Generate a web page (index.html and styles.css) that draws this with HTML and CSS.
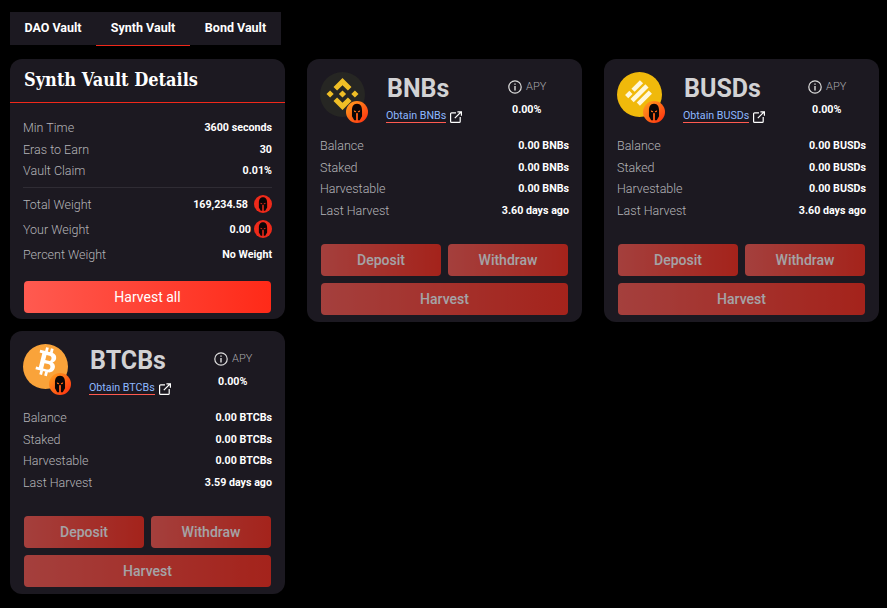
FILE: index.html
```html
<!DOCTYPE html>
<html lang="en">

<head>
    <meta charset="UTF-8">
    <title>Synth Vault</title>
    <link rel="stylesheet" href="styles.css">
</head>

<body>
    <svg class="defs" width="0" height="0">
        <symbol id="helmet" viewBox="0 0 24 24">
            <path fill-rule="evenodd" d="M12 3C7.800 3 6.500 6.500 6.500 10.500V16.500L9 21H11V13.500L12 12.800L13 13.500V21H15L17.500 16.500V10.500C17.500 6.500 16.200 3 12 3ZM8.500 10.200L11 11.300V12.200L9 11.900ZM15.500 10.200L13 11.300V12.200L15 11.900Z" fill="#0a0506" />
        </symbol>
        <symbol id="external" viewBox="0 0 12 12">
            <path d="M6 1.800H1.600C1 1.800 .6 2.200 .6 2.800V10.400C.6 11 1 11.400 1.600 11.400H9.200C9.800 11.400 10.200 11 10.200 10.400V6M4.800 7.200L11 1M7.400 .8H11.400V4.800" fill="none" stroke="#fff" stroke-width="1.200" />
        </symbol>
        <symbol id="info" viewBox="0 0 14 14">
            <circle cx="7" cy="7" r="6.200" fill="none" stroke="#ddd" stroke-width="1.200" />
            <path d="M7 6v4.400M7 3.400v1.400" stroke="#ddd" stroke-width="1.400" />
        </symbol>
    </svg>

    <div class="tabs">
        <a class="tab">DAO Vault</a>
        <a class="tab current">Synth Vault</a>
        <a class="tab">Bond Vault</a>
    </div>

    <div class="vaults">
        <div class="card details">
            <h2 class="details-title">Synth Vault Details</h2>
            <div class="details-body">
                <div class="rows">
                    <div class="row"><span class="label">Min Time</span><span class="val">3600 seconds</span></div>
                    <div class="row"><span class="label">Eras to Earn</span><span class="val">30</span></div>
                    <div class="row"><span class="label">Vault Claim</span><span class="val">0.01%</span></div>
                </div>
                <hr class="line">
                <div class="rows rows-tall">
                    <div class="row">
                        <span class="label">Total Weight</span>
                        <span class="val val-icon"><span class="val-wide">169,234.58</span><span class="spartan"><svg><use href="#helmet" /></svg></span></span>
                    </div>
                    <div class="row">
                        <span class="label">Your Weight</span>
                        <span class="val val-icon">0.00<span class="spartan"><svg><use href="#helmet" /></svg></span></span>
                    </div>
                    <div class="row"><span class="label">Percent Weight</span><span class="val">No Weight</span></div>
                </div>
                <button class="btn btn-all">Harvest all</button>
            </div>
        </div>

        <div class="card vault">
            <div class="head">
                <div class="token">
                    <svg class="token-img" viewBox="0 0 45 45">
                        <circle cx="22.500" cy="22.500" r="22.500" fill="#262623" />
                        <path d="M22.500 6L31.500 15L27.900 18.600L22.500 13.200L17.100 18.600L13.500 15ZM22.500 38L13.500 29L17.100 25.400L22.500 30.800L27.900 25.400L31.500 29ZM22.500 18.400L26.100 22L22.500 25.600L18.900 22ZM10.100 18.400L13.700 22L10.100 25.600L6.500 22ZM34.900 18.400L38.500 22L34.900 25.600L31.300 22Z" fill="#efbe26" />
                    </svg>
                    <span class="badge"><svg><use href="#helmet" /></svg></span>
                </div>
                <div class="name name-short">
                    <h3 class="symbol">BNBs</h3>
                    <div class="obtain"><a class="obtain-link">Obtain BNBs</a><svg class="ext"><use href="#external" /></svg></div>
                </div>
                <div class="apy">
                    <div class="apy-top"><svg class="info"><use href="#info" /></svg>APY</div>
                    <div class="apy-val">0.00%</div>
                </div>
            </div>
            <div class="rows">
                <div class="row"><span class="label">Balance</span><span class="val">0.00 BNBs</span></div>
                <div class="row"><span class="label">Staked</span><span class="val">0.00 BNBs</span></div>
                <div class="row"><span class="label">Harvestable</span><span class="val">0.00 BNBs</span></div>
                <div class="row"><span class="label">Last Harvest</span><span class="val">3.60 days ago</span></div>
            </div>
            <div class="actions">
                <button class="btn btn-off">Deposit</button>
                <button class="btn btn-off">Withdraw</button>
                <button class="btn btn-off btn-wide">Harvest</button>
            </div>
        </div>

        <div class="card vault">
            <div class="head">
                <div class="token">
                    <svg class="token-img" viewBox="0 0 45 45">
                        <circle cx="22.500" cy="22.500" r="22.500" fill="#f0b90b" />
                        <g transform="translate(22 20) rotate(-45)" fill="#fff8dc">
                            <rect x="-12" y="-7.700" width="6" height="4.500" />
                            <rect x="-3" y="-7.700" width="12" height="4.500" />
                            <rect x="-11" y="-1" width="21" height="4.500" />
                            <rect x="-9" y="5.800" width="17" height="4.500" />
                        </g>
                    </svg>
                    <span class="badge"><svg><use href="#helmet" /></svg></span>
                </div>
                <div class="name">
                    <h3 class="symbol">BUSDs</h3>
                    <div class="obtain"><a class="obtain-link">Obtain BUSDs</a><svg class="ext"><use href="#external" /></svg></div>
                </div>
                <div class="apy">
                    <div class="apy-top"><svg class="info"><use href="#info" /></svg>APY</div>
                    <div class="apy-val">0.00%</div>
                </div>
            </div>
            <div class="rows">
                <div class="row"><span class="label">Balance</span><span class="val">0.00 BUSDs</span></div>
                <div class="row"><span class="label">Staked</span><span class="val">0.00 BUSDs</span></div>
                <div class="row"><span class="label">Harvestable</span><span class="val">0.00 BUSDs</span></div>
                <div class="row"><span class="label">Last Harvest</span><span class="val">3.60 days ago</span></div>
            </div>
            <div class="actions">
                <button class="btn btn-off">Deposit</button>
                <button class="btn btn-off">Withdraw</button>
                <button class="btn btn-off btn-wide">Harvest</button>
            </div>
        </div>

        <div class="card vault">
            <div class="head">
                <div class="token">
                    <svg class="token-img" viewBox="0 0 45 45">
                        <circle cx="22.500" cy="22.500" r="22.500" fill="#f9a33a" />
                        <g transform="rotate(14 22.500 20)" fill="#fff">
                            <path fill-rule="evenodd" d="M14 7.500h11.500c4 0 6 2.200 6 5 0 2-1 3.500-2.600 4.300 2.200 .7 3.600 2.400 3.600 4.900 0 3.500-2.600 5.800-6.500 5.800H14l0-2.800h2.800V10.300H14zM21.300 11v5.200h3.200c1.700 0 2.500-1 2.500-2.600S26.200 11 24.500 11zM21.300 19.400V25h3.800c1.900 0 2.900-1.100 2.900-2.800s-1-2.800-2.900-2.800z" />
                            <path d="M19 3.500h2.800v4.500H19zM24 3.500h2.800v4.500H24zM19 27h2.800v4.500H19zM24 27h2.800v4.500H24z" />
                        </g>
                    </svg>
                    <span class="badge"><svg><use href="#helmet" /></svg></span>
                </div>
                <div class="name">
                    <h3 class="symbol">BTCBs</h3>
                    <div class="obtain"><a class="obtain-link">Obtain BTCBs</a><svg class="ext"><use href="#external" /></svg></div>
                </div>
                <div class="apy">
                    <div class="apy-top"><svg class="info"><use href="#info" /></svg>APY</div>
                    <div class="apy-val">0.00%</div>
                </div>
            </div>
            <div class="rows">
                <div class="row"><span class="label">Balance</span><span class="val">0.00 BTCBs</span></div>
                <div class="row"><span class="label">Staked</span><span class="val">0.00 BTCBs</span></div>
                <div class="row"><span class="label">Harvestable</span><span class="val">0.00 BTCBs</span></div>
                <div class="row"><span class="label">Last Harvest</span><span class="val">3.59 days ago</span></div>
            </div>
            <div class="actions">
                <button class="btn btn-off">Deposit</button>
                <button class="btn btn-off">Withdraw</button>
                <button class="btn btn-off btn-wide">Harvest</button>
            </div>
        </div>
    </div>
</body>

</html>
```
FILE: styles.css
```css
* {
    padding: 0;
    margin: 0;
    box-sizing: border-box;
}

body {
    background: #000;
    padding: 12px 8px 0 10px;
    font-family: Roboto, "Liberation Sans", sans-serif;
    color: #fff;
}

.defs {
    position: absolute;
}

/* tabs */
.tabs {
    display: grid;
    grid-template-columns: 86px 94px 91px;
    width: 271px;
    height: 33px;
    background: #1c1921;
}

.tab {
    font-size: 12.500px;
    font-weight: 700;
    line-height: 31px;
    text-align: center;
}

.tab.current {
    height: 34px;
    border-bottom: 1px solid #f0281a;
}

/* cards */
.vaults {
    display: grid;
    grid-template-columns: repeat(3, 275px);
    grid-template-rows: 263px auto;
    gap: 9px 22px;
    align-items: start;
    margin-top: 14px;
}

.card {
    background: #1c1921;
    border-radius: 12px;
}

.details-title {
    height: 44px;
    padding-left: 14px;
    border-bottom: 1px solid #f0281a;
    font-family: "DejaVu Serif Condensed", "DejaVu Serif", "Liberation Serif", serif;
    font-size: 18px;
    font-weight: 700;
    line-height: 42px;
}

.details-body {
    padding: 14px 13px 6px;
}

.row {
    display: flex;
    justify-content: space-between;
    align-items: center;
    height: 21.600px;
}

.rows-tall .row {
    height: 25px;
}

.label {
    font-size: 12.500px;
    font-weight: 300;
    color: #b4b4b8;
}

.val {
    font-size: 10.700px;
    font-weight: 700;
}

.val-icon {
    display: flex;
    align-items: center;
    gap: 3px;
}

.val-wide {
    margin-right: 3px;
}

.spartan {
    display: block;
    width: 18px;
    height: 18px;
    border-radius: 50%;
    background: #ee2a1a;
}

.spartan svg,
.badge svg {
    display: block;
    width: 100%;
    height: 100%;
}

.line {
    border: 0;
    border-top: 1px solid #2f2c34;
    margin: 5px 0 4px;
}

.btn {
    display: block;
    width: 100%;
    height: 32px;
    border: 0;
    border-radius: 4px;
    font-family: inherit;
    font-size: 14px;
    font-weight: 500;
    color: #fff;
    background: linear-gradient(90deg, #ff5a50, #ff2a18);
}

.btn-all {
    width: 247px;
    margin: 14px 1px 0;
    font-weight: 400;
}

.btn-off {
    opacity: .6;
}

/* vault card */
.vault {
    padding: 13px 13px 7px;
}

.head {
    display: flex;
    height: 63px;
}

.token {
    position: relative;
    flex: none;
    width: 45px;
    height: 45px;
    margin-right: 22px;
}

.token-img {
    display: block;
    width: 45px;
    height: 45px;
}

.badge {
    position: absolute;
    right: -3px;
    bottom: -6px;
    width: 22px;
    height: 22px;
    border-radius: 50%;
    background: linear-gradient(135deg, #ffa51e, #ff2a10);
}

.name {
    width: 124px;
    flex: none;
}

.name-short {
    width: 121px;
}

.symbol {
    font-size: 25px;
    font-weight: 700;
    line-height: 34px;
    color: #d2d2d4;
}

.obtain {
    display: flex;
    align-items: flex-start;
    gap: 4px;
    margin-top: 3px;
    margin-left: -1px;
}

.obtain-link {
    font-size: 10.700px;
    font-weight: 400;
    line-height: 13px;
    color: #8db8ff;
    border-bottom: 1px solid #ff5a50;
}

.ext {
    width: 12px;
    height: 12px;
    margin-top: 2px;
}

.apy {
    flex: none;
    padding-top: 8px;
}

.apy-top {
    display: flex;
    align-items: center;
    gap: 4px;
    font-size: 11px;
    font-weight: 300;
    line-height: 14px;
    color: #a8a8ac;
}

.info {
    width: 14px;
    height: 14px;
}

.apy-val {
    margin-top: 9px;
    margin-left: 4px;
    font-size: 10.700px;
    font-weight: 700;
    line-height: 14px;
}

.actions {
    display: grid;
    grid-template-columns: 120px 120px;
    gap: 7px;
    margin: 23px 1px 0;
}

.btn-wide {
    grid-column: 1 / 3;
}
```
